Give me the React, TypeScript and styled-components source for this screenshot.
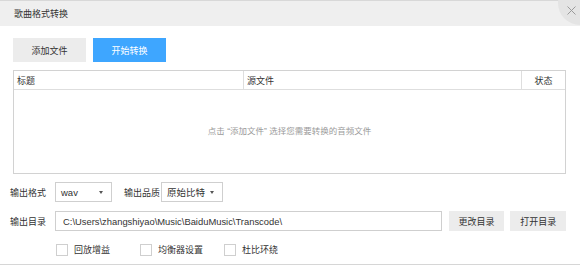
import React from 'react';
import styled, { createGlobalStyle } from 'styled-components';

const Global = createGlobalStyle`
  html, body { margin: 0; padding: 0; background: #fff; }
  body {
    font-family: "Liberation Sans", "Noto Sans CJK SC", sans-serif;
    font-size: 9px;
    color: #333;
  }
`;

const Window = styled.div`
  position: relative;
  width: 580px;
  height: 266px;
  overflow: hidden;
  background: #fff;
  display: flex;
  flex-direction: column;
`;

const TitleBar = styled.div`
  height: 25px;
  border-top: 1px solid #d8d8d8;
  background: #efefef;
  display: flex;
  align-items: center;
  padding-left: 14px;
  font-size: 9px;
  color: #333;
`;

const Close = styled.button`
  position: absolute;
  top: -19px;
  right: -22px;
  width: 44px;
  height: 44px;
  border: none;
  border-radius: 50%;
  background: #e4e4e4;
  padding: 0;
  cursor: pointer;
  svg {
    position: absolute;
    left: 9px;
    top: 25px;
  }
`;

const Body = styled.div`
  padding: 12px 14px 0 13px;
  display: flex;
  flex-direction: column;
`;

const Toolbar = styled.div`
  display: flex;
  gap: 7px;
`;

const Btn = styled.button<{ $primary?: boolean; $w?: number }>`
  width: ${(p) => p.$w ?? 73}px;
  height: ${(p) => (p.$primary !== undefined ? 24 : 20)}px;
  border: none;
  padding: 0;
  font-family: inherit;
  font-size: 9px;
  background: ${(p) => (p.$primary ? '#3ea6ff' : '#ececec')};
  color: ${(p) => (p.$primary ? '#fff' : '#333')};
  cursor: pointer;
`;

const Table = styled.div`
  margin-top: 8px;
  width: 553px;
  height: 104px;
  box-sizing: border-box;
  border: 1px solid #d2d2d2;
  display: flex;
  flex-direction: column;
`;

const HeadRow = styled.div`
  display: grid;
  grid-template-columns: 229px 278px 1fr;
  height: 19px;
  box-sizing: border-box;
  border-bottom: 1px solid #dedede;
`;

const HeadCell = styled.div<{ $center?: boolean }>`
  display: flex;
  align-items: center;
  justify-content: ${(p) => (p.$center ? 'center' : 'flex-start')};
  padding-left: ${(p) => (p.$center ? 0 : 3)}px;
  & + & { border-left: 1px solid #dedede; }
`;

const Empty = styled.div`
  flex: 1;
  display: flex;
  align-items: center;
  justify-content: center;
  color: #9a9a9a;
  font-size: 8.5px;
  padding-bottom: 4px;
`;

const Form = styled.div`
  margin-top: 8px;
  margin-left: -3px;
  display: flex;
  flex-direction: column;
`;

const Row = styled.div<{ $mt?: number }>`
  display: flex;
  align-items: center;
  margin-top: ${(p) => p.$mt ?? 0}px;
`;

const Label = styled.span<{ $w?: number }>`
  width: ${(p) => p.$w ?? 45}px;
  flex-shrink: 0;
`;

const Select = styled.div<{ $w: number }>`
  width: ${(p) => p.$w}px;
  height: 20px;
  box-sizing: border-box;
  border: 1px solid #cfcfcf;
  display: flex;
  align-items: center;
  justify-content: space-between;
  padding: 0 8px 0 5px;
  margin-right: 12px;
  font-size: 9.5px;
`;

const Caret = styled.span`
  width: 0;
  height: 0;
  border-left: 2.5px solid transparent;
  border-right: 2.5px solid transparent;
  border-top: 3px solid #555;
`;

const PathInput = styled.input`
  width: 389px;
  height: 20px;
  box-sizing: border-box;
  border: 1px solid #cfcfcf;
  padding: 0 0 0 7px;
  font-family: "Liberation Sans", sans-serif;
  font-size: 9.4px;
  color: #333;
  margin-right: 7px;
  outline: none;
`;

const Checks = styled.div`
  display: flex;
  margin-top: 12px;
  padding-left: 46px;
`;

const Check = styled.label`
  width: 84px;
  display: flex;
  align-items: center;
  gap: 6px;
`;

const Box = styled.span`
  width: 10px;
  height: 10px;
  border: 1px solid #cfcfcf;
  background: #fff;
`;

const Footer = styled.div`
  position: absolute;
  left: 0;
  right: 0;
  bottom: 1px;
  border-top: 1px solid #d6d6d6;
`;

export default function App() {
  return (
    <>
      <Global />
      <Window>
        <TitleBar>歌曲格式转换</TitleBar>
        <Close aria-label="关闭">
          <svg width="9" height="9" viewBox="0 0 9 9">
            <path d="M0.5 0.5L8.5 8.5M8.5 0.5L0.5 8.5" stroke="#9a9a9a" strokeWidth="1" />
          </svg>
        </Close>
        <Body>
          <Toolbar>
            <Btn $primary={false}>添加文件</Btn>
            <Btn $primary>开始转换</Btn>
          </Toolbar>
          <Table>
            <HeadRow>
              <HeadCell>标题</HeadCell>
              <HeadCell>源文件</HeadCell>
              <HeadCell $center>状态</HeadCell>
            </HeadRow>
            <Empty>点击 “添加文件” 选择您需要转换的音频文件</Empty>
          </Table>
          <Form>
            <Row>
              <Label>输出格式</Label>
              <Select $w={57}>wav<Caret /></Select>
              <Label $w={37}>输出品质</Label>
              <Select $w={62}>原始比特<Caret /></Select>
            </Row>
            <Row $mt={9}>
              <Label>输出目录</Label>
              <PathInput readOnly value={'C:\\Users\\zhangshiyao\\Music\\BaiduMusic\\Transcode\\'} />
              <Btn $w={56}>更改目录</Btn>
              <Btn $w={56} style={{ marginLeft: 6 }}>打开目录</Btn>
            </Row>
            <Checks>
              <Check><Box />回放增益</Check>
              <Check><Box />均衡器设置</Check>
              <Check><Box />杜比环绕</Check>
            </Checks>
          </Form>
        </Body>
        <Footer />
      </Window>
    </>
  );
}
